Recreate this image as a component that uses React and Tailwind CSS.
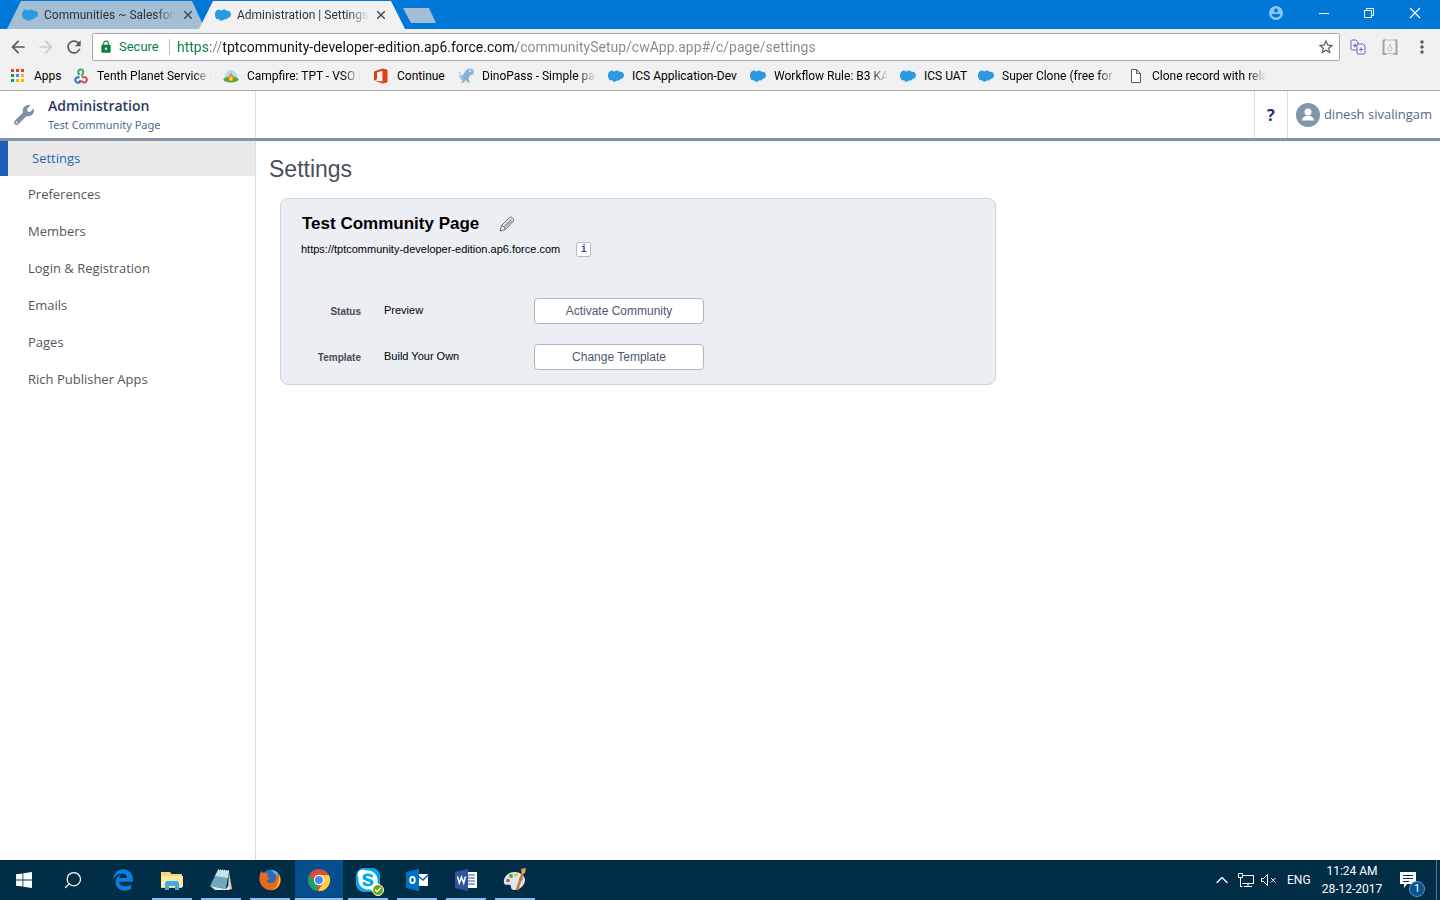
import { FaWrench, FaEdgeLegacy, FaSkype } from "react-icons/fa";
import {
  MdArrowBack,
  MdArrowForward,
  MdRefresh,
  MdLock,
  MdStarBorder,
  MdMoreVert,
} from "react-icons/md";
import { Search, ChevronUp, Check } from "lucide-react";

function Cloud() {
  return (
    <svg viewBox="1 0.5 15 11" width="16" height="12" fill="#2a9be0" aria-hidden="true">
      <path d="M1 5.2C1 3 2.4.9 4.5.9c1 0 1.800.3 2.400 1C7.500 1.200 8.400.8 9.400.8c1.200 0 2 .5 2.600 1.400 2-.6 4 1 4 3.200S14.400 8.800 12.600 8.800c-.5 1.200-1.900 1.800-3.100 1.300C8.800 11.600 6 12 4.900 9.900 3 10.300 1.600 9.200 1.500 7.800 1 7.200.9 6.200 1 5.200z" />
    </svg>
  );
}

function AppsGrid() {
  const colors = ["#db4437", "#db4437", "#db4437", "#0f9d58", "#4285f4", "#f4b400", "#0f9d58", "#f4b400", "#f4b400"];
  return (
    <svg viewBox="0 0 16 16" width="16" height="16" aria-hidden="true">
      {colors.map((c, i) => (
        <rect key={i} x={(i % 3) * 5 + 1} y={Math.floor(i / 3) * 5 + 1} width="3" height="3" fill={c} />
      ))}
    </svg>
  );
}

function Knot() {
  return (
    <svg viewBox="0 0 16 16" width="16" height="16" fill="none" strokeWidth="2" aria-hidden="true">
      <path d="M6.500 7C4.500 5 5 1.500 7.800 1.500s3.500 3.500.7 6.500" stroke="#3fa66b" />
      <path d="M6.500 9.500C4 8.500 1.500 10.500 2.500 13s4.500 2.500 5-1" stroke="#3b6fb5" />
      <path d="M9 9.500c3-1.500 5.500.5 4.800 3s-4 2.800-5.300.2" stroke="#d84a4a" />
    </svg>
  );
}

function Campfire() {
  return (
    <svg viewBox="0 0 16 16" width="16" height="16" aria-hidden="true">
      <path d="M1 11C2 5 5 2 8 2s6 3 7 9z" fill="#b5dcef" />
      <ellipse cx="8" cy="11.500" rx="7.500" ry="3" fill="#5aa73c" />
      <path d="M8 4c0 2 3 3.500 3 6 0 2-1.300 3-3 3s-3-1-3-3c0-1.500 2-3 3-6z" fill="#f08a24" />
      <path d="M8 8c.5 1 1.500 1.600 1.500 3 0 2-3 2-3 0 0-1 1-2 1.500-3z" fill="#ffe04a" />
    </svg>
  );
}

function Office() {
  return (
    <svg viewBox="0 0 16 16" width="16" height="16" fill="#dc3e15" aria-hidden="true">
      <path d="M1 3.500 9.500.5l5 1.200v12.600l-5 1.200L1 12.500l8.500 1V3L4 4.200v7L1 12.500z" />
    </svg>
  );
}

function Dino() {
  return (
    <svg viewBox="0 0 16 16" width="16" height="16" aria-hidden="true">
      <path d="M8 2l3-1.500 4.500 1V6L12 7.500l-1.500 3 1.500 4H9.500L8 12l-3 3-2-.5L4.500 12 0 7l4 1.500z" fill="#84b4da" />
      <path d="M1 4l3 4M5 9l-2.500 3" stroke="#84b4da" />
      <circle cx="12" cy="3" r="1" fill="#f1f1f1" />
    </svg>
  );
}

function PageIcon() {
  return (
    <svg viewBox="0 0 16 16" width="16" height="16" fill="#fff" stroke="#5a5a5a" aria-hidden="true">
      <path d="M3.500 1.500h5l4 4v9h-9zM8.500 1.500v4h4" />
    </svg>
  );
}

function CloseIcon() {
  return (
    <svg viewBox="0 0 8 8" width="8" height="8" stroke="#4a4a4a" strokeWidth="1.500" aria-hidden="true">
      <path d="M0 0l8 8M8 0 0 8" />
    </svg>
  );
}

const bookmarks = [
  { label: "Apps", Icon: AppsGrid, width: "w-[27px]" },
  { label: "Tenth Planet Service D", Icon: Knot, width: "w-[114px]", fade: true },
  { label: "Campfire: TPT - VSO I", Icon: Campfire, width: "w-[114px]", fade: true },
  { label: "Continue", Icon: Office, width: "w-[49px]" },
  { label: "DinoPass - Simple pa", Icon: Dino, width: "w-[114px]", fade: true },
  { label: "ICS Application-Dev", Icon: Cloud, width: "w-[106px]" },
  { label: "Workflow Rule: B3 KA", Icon: Cloud, width: "w-[114px]", fade: true },
  { label: "ICS UAT", Icon: Cloud, width: "w-[42px]" },
  { label: "Super Clone (free for", Icon: Cloud, width: "w-[114px]", fade: true },
  { label: "Clone record with rela", Icon: PageIcon, width: "w-[114px]", fade: true },
];

const FADE = "[mask-image:linear-gradient(to_right,black_84%,transparent)]";

function TabStrip() {
  return (
    <div className="flex h-[29px] items-start justify-between bg-[#0078d7]">
      <div className="flex h-full items-end pl-[7px]">
        <div className="flex h-7 w-[198px] items-center bg-[#a4bfd5] pl-[15px] [clip-path:polygon(14px_0,185px_0,100%_100%,0_100%)]">
          <Cloud />
          <button type="button" className={`ml-1.5 w-[132px] text-left text-xs whitespace-nowrap ${FADE}`}>
            Communities ~ Salesforc
          </button>
          <button type="button" aria-label="Close tab" className="ml-2"><CloseIcon /></button>
        </div>
        <div className="-ml-1.5 flex h-7 w-[206px] items-center bg-[#f1f1f1] pl-4 [clip-path:polygon(14px_0,192px_0,100%_100%,0_100%)]">
          <Cloud />
          <button type="button" className={`ml-1.5 w-[132px] text-left text-xs whitespace-nowrap ${FADE}`}>
            Administration | Settings
          </button>
          <button type="button" aria-label="Close tab" className="ml-2"><CloseIcon /></button>
        </div>
        <button
          type="button"
          aria-label="New tab"
          className="mb-1.5 -ml-0.5 h-[15px] w-[33px] bg-[#a4bfd5] [clip-path:polygon(0_0,26px_0,100%_100%,8px_100%)]"
        />
      </div>
      <div className="flex h-[26px] items-center text-white">
        <button type="button" aria-label="Profile" className="mr-[35px]">
          <svg viewBox="0 0 14 14" width="14" height="14">
            <circle cx="7" cy="7" r="7" fill="#8cc6f5" />
            <circle cx="7" cy="4.500" r="2" fill="#0078d7" />
            <path d="M2.500 8h9c-.5 2.500-2.500 3.500-4.500 3.500S3 10.500 2.500 8z" fill="#0078d7" />
          </svg>
        </button>
        <button type="button" aria-label="Minimize" className="mr-[33px]">
          <svg viewBox="0 0 12 12" width="12" height="12" stroke="currentColor"><path d="M1 6.500h10" /></svg>
        </button>
        <button type="button" aria-label="Restore" className="mr-[34px]">
          <svg viewBox="0 0 12 12" width="12" height="12" fill="none" stroke="currentColor">
            <path d="M1.500 3.500h7v7h-7zM3.500 3.500v-2h7v7h-2" />
          </svg>
        </button>
        <button type="button" aria-label="Close" className="mr-[19px]">
          <svg viewBox="0 0 12 12" width="12" height="12" stroke="currentColor" strokeWidth="1.200"><path d="M1 1l10 10M11 1 1 11" /></svg>
        </button>
      </div>
    </div>
  );
}

function Toolbar() {
  return (
    <div className="flex h-9 items-center pr-2 pl-2">
      <button type="button" aria-label="Back" className="text-[#5a5a5a]"><MdArrowBack size={20} /></button>
      <button type="button" aria-label="Forward" className="ml-2 text-[#cccccc]"><MdArrowForward size={20} /></button>
      <button type="button" aria-label="Reload" className="ml-2 text-[#5a5a5a]"><MdRefresh size={20} /></button>
      <div className="ml-2 flex h-7 flex-1 items-center rounded-xs border border-[#a9a9a9] bg-white pl-1.5">
        <MdLock size={14} className="text-[#0b8043]" />
        <span className="ml-1.5 w-[42px] text-[13px] text-[#0b8043]">Secure</span>
        <span className="ml-2 h-4 w-px bg-[#c0c0c0]" />
        <input
          aria-label="Address"
          className="ml-[7px] min-w-0 flex-1 bg-[linear-gradient(to_right,#0b8043_34px,#888888_34px,#888888_46px,#111111_46px,#111111_339px,#888888_339px)] bg-clip-text text-sm text-transparent outline-none"
          defaultValue="https://tptcommunity-developer-edition.ap6.force.com/communitySetup/cwApp.app#/c/page/settings"
        />
        <button type="button" aria-label="Bookmark" className="mr-1 text-[#5a5a5a]"><MdStarBorder size={18} /></button>
      </div>
      <button type="button" aria-label="Copy pages" className="ml-2.5">
        <svg viewBox="0 0 16 16" width="16" height="16" fill="#f5f5ff" stroke="#6467b8">
          <path d="M1 2q0-1 1-1h4l2 2v8H2q-1 0-1-1z" />
          <path d="M8 5h5l2 2v7q0 1-1 1H8q-1 0-1-1V6q0-1 1-1z" />
          <path d="M3 6.500h4M5 4.500v4M9 10.500h4M11 8.500v4" />
        </svg>
      </button>
      <button type="button" aria-label="Lamp" className="ml-4">
        <svg viewBox="0 0 16 16" width="16" height="16" fill="none" stroke="#a3a3a3">
          <path d="M3 1Q1.500 1 1.500 3v12h3M13 1q1.500 0 1.500 2v12h-3" strokeWidth="2" />
          <path d="M3 1h10M5 14.500h6M8 5c0 2-2 3.500-2 5s1 2 2 2 2-1 2-2-2-3-2-5z" stroke="#bdbdbd" />
        </svg>
      </button>
      <button type="button" aria-label="Menu" className="ml-3.5 text-[#5a5a5a]"><MdMoreVert size={20} /></button>
    </div>
  );
}

function Bookmarks() {
  return (
    <nav aria-label="Bookmarks" className="flex h-[26px] items-center gap-3 overflow-hidden border-b border-[#a9a9a9] pb-1 pl-2.5">
      {bookmarks.map(({ label, Icon, width, fade }) => (
        <a key={label} href="#bookmark" className="flex shrink-0 items-center gap-2 text-xs text-black">
          <Icon />
          <span className={`whitespace-nowrap ${width} ${fade ? FADE : ""}`}>{label}</span>
        </a>
      ))}
    </nav>
  );
}

function SiteHeader() {
  return (
    <header className="flex h-[50px] border-b-3 border-[#8093a7] font-['Noto_Sans','Open_Sans',sans-serif] text-[#54698d]">
      <div className="flex w-64 items-center border-r border-[#d8dde6] pl-[14px]">
        <FaWrench size={20} className="text-[#7f8fa6]" />
        <div className="ml-[14px] pt-px">
          <p className="font-['Open_Sans'] text-sm leading-5 font-semibold text-[#2b3a63]">Administration</p>
          <p className="text-[11px] leading-[18px]">Test Community Page</p>
        </div>
      </div>
      <div className="ml-auto flex">
        <button type="button" aria-label="Help" className="w-[33px] border-l border-[#d8dde6] text-base font-bold text-[#16325c]">?</button>
        <button type="button" className="flex items-center gap-1 border-l border-[#d8dde6] px-2 font-['Open_Sans'] text-[13px]">
          <svg viewBox="0 0 24 24" width="24" height="24" aria-hidden="true">
            <circle cx="12" cy="12" r="12" fill="#8195ab" />
            <circle cx="12" cy="9" r="3.500" fill="#fff" />
            <path d="M6 17.500c0-3 2.500-4 4-4.500h4c1.500.5 4 1.500 4 4.500z" fill="#fff" />
          </svg>
          dinesh sivalingam
        </button>
      </div>
    </header>
  );
}

function Sidebar() {
  const links = ["Preferences", "Members", "Login & Registration", "Emails", "Pages", "Rich Publisher Apps"];
  return (
    <nav aria-label="Administration" className="w-64 shrink-0 border-r border-[#d8dde6] font-['Open_Sans','Noto_Sans',sans-serif] text-[13px] text-[#54575c]">
      <a href="#settings" className="flex h-[35px] items-center border-l-8 border-[#1f5fb8] bg-[#ebe9e8] pl-6 text-[#2a62b5]">Settings</a>
      {links.map((link) => (
        <a key={link} href="#section" className="flex h-[37px] items-center pl-7">{link}</a>
      ))}
    </nav>
  );
}

function SettingsRow({ name, value, action }) {
  return (
    <div className="flex h-[26px] items-center">
      <dt className="w-20 text-right text-[10px] font-bold text-[#4a4a56]">{name}</dt>
      <dd className="ml-[23px] w-[150px] pb-0.5 text-[11px] text-black">{value}</dd>
      <dd>
        <button type="button" className="h-[26px] w-[170px] rounded-sm border border-[#b5b5b5] bg-white text-xs text-[#4b5a6e]">{action}</button>
      </dd>
    </div>
  );
}

function Settings() {
  return (
    <main className="min-w-0 flex-1 font-['Liberation_Sans',Arial,sans-serif]">
      <h1 className="pt-[14px] pl-[13px] text-[23px] leading-7 text-[#4a4f5a]">Settings</h1>
      <section className="mt-[15px] mr-6 ml-6 max-w-[716px] rounded-lg border border-[#ccd4dc] bg-[#ebeef3] pt-[15px] pb-[14px]">
        <div className="flex items-center pl-[21px]">
          <h2 className="text-[17px] leading-5 font-bold text-black">Test Community Page</h2>
          <button type="button" aria-label="Edit name" className="ml-5">
            <svg viewBox="0 0 16 16" width="16" height="16" fill="none" stroke="#6a6a6a">
              <path d="M1 15l1.500-5.500L10.500 1.500c1.500-1.500 5 1.500 4 3.500L6.500 13.500zM2.500 9.500q3 .5 4 4M5 10.500l7.500-7.500M5.500 12l7.500-7.500" />
            </svg>
          </button>
        </div>
        <div className="mt-[7px] flex items-center pl-5 text-[11px] leading-4 text-black">
          https://tptcommunity-developer-edition.ap6.force.com
          <button type="button" aria-label="More information" className="ml-4 h-[15px] w-[15px] rounded-xs border border-[#b9bcc2] bg-white font-['Liberation_Mono',monospace] text-[10px] leading-[14px] font-bold text-[#2a4fa8]">
            i
          </button>
        </div>
        <dl className="mt-[41px] flex flex-col gap-5">
          <SettingsRow name="Status" value="Preview" action="Activate Community" />
          <SettingsRow name="Template" value="Build Your Own" action="Change Template" />
        </dl>
      </section>
    </main>
  );
}

function WindowsLogo() {
  return (
    <svg viewBox="0 0 16 16" width="16" height="16" fill="#fff">
      <path d="M0 2.300 6.500 1.400v6.200H0zM7.300 1.300 16 0v7.600H7.300zM0 8.400h6.500v6.200L0 13.700zM7.300 8.400H16V16l-8.700-1.300z" />
    </svg>
  );
}

function Explorer() {
  return (
    <svg viewBox="0 0 24 24" width="24" height="24">
      <path d="M1 4h9l1.500 2H22v14H1z" fill="#f4d77c" />
      <path d="M1 8h22v11H1z" fill="#fce9a6" />
      <path d="M5 22v-7l1.500-2h11l1.500 2v7h-4v-4H9v4z" fill="#44a9de" />
    </svg>
  );
}

function Notepad() {
  return (
    <svg viewBox="0 0 24 24" width="24" height="24">
      <path d="M20 4l3 17-4 1z" fill="#d8d3c4" />
      <path d="M9 2l11 1-3 18-16-3z" fill="#6fa9bb" />
      <path d="M9 2l11 1-1 7L6 8z" fill="#c3e3ea" />
      <path d="M1 18l16 3 3-4v5H6z" fill="#dfe9ec" />
      <path d="M9 2l11 1" stroke="#eef6f8" strokeWidth="1.500" strokeDasharray="1 1" />
    </svg>
  );
}

function Firefox() {
  return (
    <svg viewBox="0 0 24 24" width="24" height="24">
      <circle cx="12.500" cy="11" r="9.500" fill="#2b6cb8" />
      <path d="M13 2c5 0 8 3 8 7l-4-3z" fill="#5fb4e0" />
      <path d="M2 6c0-1 1-2 1.500-3l1.500 2h3l2 1-1 3 3 1c-1 2-3 1-3 3 1 3 6 3 8 0 2-2 1-5 0-7 3 1 3 4 3 4l1-4c3 5 2 9 0 12-3 5-11 6-16 1C1 15 1 10 2 6z" fill="#ea6a1b" />
      <path d="M21 7c3 6 0 14-7 15 5-2 7-7 7-15z" fill="#fbc52d" />
    </svg>
  );
}

function Chrome() {
  return (
    <svg viewBox="0 0 24 24" width="24" height="24">
      <circle cx="12" cy="12" r="11" fill="#dd4b3e" />
      <path d="M2.500 6.500 8 15l4 2-3 5.600A11 11 0 0 1 2.500 6.500z" fill="#1da462" />
      <path d="M12 7h9.800A11 11 0 0 1 11 23l5.300-8.500z" fill="#ffce44" />
      <circle cx="12" cy="12" r="5.200" fill="#fff" />
      <circle cx="12" cy="12" r="4" fill="#4a8af4" />
    </svg>
  );
}

function Skype() {
  return (
    <span className="relative">
      <FaSkype size={24} className="rounded-lg bg-[#00a8ec] text-white" />
      <span className="absolute -right-1 -bottom-1 flex h-3 w-3 items-center justify-center rounded-full border border-white bg-[#6aaa0e] text-white">
        <Check size={8} strokeWidth={4} />
      </span>
    </span>
  );
}

function Outlook() {
  return (
    <svg viewBox="0 0 24 24" width="24" height="24">
      <path d="M12 6h11v12H12z" fill="#fff" />
      <path d="M13 8l5 4 5-5" fill="none" stroke="#0a63b5" strokeWidth="1.500" />
      <path d="M1 4l13-3v22L1 20z" fill="#0072c6" />
      <ellipse cx="7.500" cy="12" rx="2.300" ry="3.200" fill="none" stroke="#fff" strokeWidth="1.800" />
    </svg>
  );
}

function Word() {
  return (
    <svg viewBox="0 0 24 24" width="24" height="24">
      <path d="M12 4h11v16H12z" fill="#fff" />
      <path d="M14 7h7M14 10h7M14 13h7M14 16h7" stroke="#2b579a" strokeWidth="1.200" />
      <path d="M1 4l13-3v22L1 20z" fill="#2b579a" />
      <path d="M3.500 8.500 5.300 15l2.200-6 2.200 6 1.800-6.500" fill="none" stroke="#fff" strokeWidth="1.500" />
    </svg>
  );
}

function Paint() {
  return (
    <svg viewBox="0 0 24 24" width="24" height="24">
      <path d="M13 4C5 3 0 10 1 15c1 3 4 1 6 2s0 5 4 5c6 0 11-5 11-10 0-4-4-7-9-8z" fill="#dce6ee" />
      <circle cx="8" cy="8" r="2" fill="#4ca64c" />
      <circle cx="13" cy="7" r="1.800" fill="#e8b93a" />
      <circle cx="5" cy="12.500" r="1.800" fill="#d9453b" />
      <circle cx="18" cy="11" r="1.800" fill="#3d7fc9" />
      <path d="M20 4 14 22" stroke="#c9782c" strokeWidth="2.500" />
      <path d="M18 1l5-1-1 5-3 1z" fill="#e3a45b" />
    </svg>
  );
}

const tasks = [
  { name: "File Explorer", Icon: Explorer },
  { name: "Notepad", Icon: Notepad },
  { name: "Firefox", Icon: Firefox },
  { name: "Chrome", Icon: Chrome, active: true },
  { name: "Skype", Icon: Skype },
  { name: "Outlook", Icon: Outlook },
  { name: "Word", Icon: Word },
  { name: "Paint", Icon: Paint },
];

function Taskbar() {
  return (
    <footer className="flex h-10 items-stretch justify-between bg-[#022d47] text-white">
      <div className="flex gap-px">
        <button type="button" aria-label="Start" className="flex w-12 items-center justify-center"><WindowsLogo /></button>
        <button type="button" aria-label="Search" className="flex w-12 items-center justify-center">
          <Search size={20} strokeWidth={1.5} className="-scale-x-100" />
        </button>
        <button type="button" aria-label="Edge" className="ml-px flex w-12 items-center justify-center text-[#0a7fe0]">
          <FaEdgeLegacy size={22} />
        </button>
        {tasks.map(({ name, Icon, active }) => (
          <button
            key={name}
            type="button"
            aria-label={name}
            className={`flex w-12 flex-col items-center justify-end ${active ? "bg-[#05508c]" : ""}`}
          >
            <span className="flex flex-1 items-center pt-0.5"><Icon /></span>
            <span className={`h-0.5 bg-[#8fc0ec] ${active ? "w-full" : "w-10"}`} />
          </button>
        ))}
      </div>
      <div className="flex items-center text-xs">
        <ChevronUp size={20} strokeWidth={1.5} />
        <svg viewBox="0 0 16 16" width="16" height="16" className="ml-1.5" fill="none" stroke="currentColor">
          <path d="M4.500 3.500h11v8h-11M10 11.500v3M6 14.500h8M.5 1.500h4v4h-4zM2.500 5.500v9h2" />
        </svg>
        <svg viewBox="0 0 16 16" width="16" height="16" className="ml-[7px]" fill="none" stroke="currentColor">
          <path d="M.5 6.500h2l4-4v11l-4-4h-2zM10 6l4.500 4.500M14.500 6 10 10.500" />
        </svg>
        <span className="ml-2.5 w-6">ENG</span>
        <time className="ml-2.5 w-[62px] text-center leading-[18px]" dateTime="2017-12-28T11:24">
          11:24 AM
          <br />
          28-12-2017
        </time>
        <button type="button" aria-label="Notifications" className="relative ml-4">
          <svg viewBox="0 0 18 18" width="18" height="18">
            <path d="M1 1h16v12H8l-3 4v-4H1z" fill="#fff" />
            <path d="M4 4.500h10M4 7.500h10M4 10.500h6" stroke="#022d47" />
          </svg>
          <span className="absolute -right-2 -bottom-2 flex h-4 w-4 items-center justify-center rounded-full border border-[#5b9bd0] bg-[#0a5390] text-[11px]">1</span>
        </button>
        <span className="mr-[3px] ml-[19px] h-full w-px bg-[#5a7484]" />
      </div>
    </footer>
  );
}

export default function App() {
  return (
    <div className="flex min-h-screen flex-col bg-white font-['Roboto','Open_Sans',sans-serif]">
      <div className="bg-[#f1f1f1] text-[#333]">
        <TabStrip />
        <Toolbar />
        <Bookmarks />
      </div>
      <SiteHeader />
      <div className="flex flex-1">
        <Sidebar />
        <Settings />
      </div>
      <Taskbar />
    </div>
  );
}
